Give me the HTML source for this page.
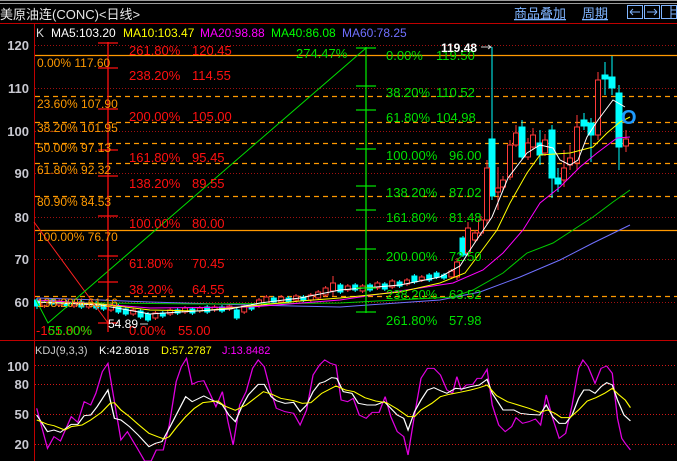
<!DOCTYPE html>
<html><head><meta charset="utf-8"><style>
html,body{margin:0;padding:0;background:#000;width:677px;height:461px;overflow:hidden}
svg{display:block}
text{font-family:"Liberation Sans","Noto Sans CJK SC",sans-serif}
</style></head><body>
<svg width="677" height="461" xmlns="http://www.w3.org/2000/svg">
<rect width="677" height="461" fill="#000"/>
<rect x="0" y="0" width="677" height="1" fill="#9a9a9a"/>
<rect x="0" y="3" width="677" height="1" fill="#9a9a9a"/>
<text x="0" y="19" fill="#e8e8e8" font-size="13">美原油连(CONC)&lt;日线&gt;</text>
<text x="514" y="18" fill="#7fb4ff" font-size="13" text-decoration="underline">商品叠加</text>
<text x="582" y="18" fill="#7fb4ff" font-size="13" text-decoration="underline">周期</text>
<g fill="none" stroke="#7fb4ff" stroke-width="1">
<rect x="627.5" y="5.5" width="15" height="13"/><rect x="644.5" y="5.5" width="15" height="13"/><rect x="661.5" y="5.5" width="15" height="13"/>
<path d="M630 12h10M630 12l3-3M630 12l3 3M657 12h-10M657 12l-3-3M657 12l-3 3M671 6v12M671 10h5M671 14h5"/>
</g>
<rect x="0" y="23" width="677" height="1" fill="#c00000"/>
<rect x="34" y="23" width="1" height="438" fill="#c00000"/>
<rect x="0" y="340" width="677" height="1" fill="#c00000"/>
<g font-size="12">
<text x="36" y="37" fill="#ddd">K</text>
<text x="51" y="37" fill="#fff">MA5:103.20</text>
<text x="123" y="37" fill="#ffff00">MA10:103.47</text>
<text x="200" y="37" fill="#ff00ff">MA20:98.88</text>
<text x="271" y="37" fill="#00ff00">MA40:86.08</text>
<text x="342" y="37" fill="#7070ff">MA60:78.25</text>
</g>
<g font-size="13" font-weight="bold" fill="#c8c8d0" text-anchor="end">
<text x="29" y="50">120</text><text x="29" y="93">110</text><text x="29" y="136">100</text><text x="29" y="178">90</text><text x="29" y="222">80</text><text x="29" y="264">70</text><text x="29" y="307">60</text>
<text x="29" y="371">100</text><text x="29" y="389">80</text><text x="29" y="419">50</text><text x="29" y="449">20</text>
</g>
<g stroke="#a01010" stroke-dasharray="1,2" stroke-width="1">
<path d="M35 45.5H677M35 88.5H677M35 131.5H677M35 173.5H677M35 217.5H677M35 259.5H677M35 302.5H677"/>
<path d="M35 365.5H677M35 384.5H677M35 414.5H677M35 444.5H677" stroke="#d01818"/>
</g>
<g stroke="#ff9900" stroke-width="1.2">
<path d="M35 55.5H677M35 230.5H677"/>
<path stroke-dasharray="5,4" d="M35 96.5H677M35 122.5H677M35 143.5H677M35 163.5H677M35 196.5H677M35 296.5H677"/>
</g>
<!-- candles: down (cyan) -->
<g fill="#00ffff" stroke="#00ffff" stroke-width="1">
<path d="M37 298V309M51.8 298V306M66.6 300V308M81.4 300V309M96.2 301V310M103.6 303V311M118.4 304V314M125.8 307V316M140.6 309V319M148 312V322M162.8 311V318M177.6 308V315M192.4 307V315M207.2 305V314M222 305V313M236.8 308V320M251.6 303V311M273.8 296V304M288.6 296V304M303.4 295V302M340.4 283V294M355.2 283V292M370 283V292M384.8 282V291M399.6 280V288M414.4 274V284M429.2 273V282M436.6 271V279M444 273V280M463 236V257M492 47V200M522 120V160M540 130V165M552 125V198M558 168V192M584 113V130M591 118V162M605 62V95M612 56V95M619 85V170"/>
<rect x="34.5" y="300" width="5" height="6"/><rect x="49.3" y="300" width="5" height="4"/><rect x="64.1" y="302" width="5" height="4"/><rect x="78.9" y="302" width="5" height="5"/><rect x="93.7" y="303" width="5" height="5"/><rect x="101.1" y="305" width="5" height="4"/><rect x="115.9" y="306" width="5" height="6"/><rect x="123.3" y="309" width="5" height="5"/><rect x="138.1" y="311" width="5" height="6"/><rect x="145.5" y="314" width="5" height="6"/><rect x="160.3" y="313" width="5" height="3"/><rect x="175.1" y="310" width="5" height="3"/><rect x="189.9" y="309" width="5" height="4"/><rect x="204.7" y="307" width="5" height="5"/><rect x="219.5" y="307" width="5" height="4"/><rect x="234.3" y="310" width="5" height="8"/><rect x="249.1" y="305" width="5" height="4"/><rect x="271.3" y="298" width="5" height="4"/><rect x="286.1" y="298" width="5" height="4"/><rect x="300.9" y="297" width="5" height="3"/><rect x="337.9" y="285" width="5" height="7"/><rect x="352.7" y="285" width="5" height="5"/><rect x="367.5" y="285" width="5" height="5"/><rect x="382.3" y="284" width="5" height="5"/><rect x="397.1" y="282" width="5" height="4"/><rect x="411.9" y="276" width="5" height="6"/><rect x="426.7" y="275" width="5" height="5"/><rect x="434.1" y="273" width="5" height="4"/><rect x="441.5" y="275" width="5" height="3"/><rect x="460" y="238" width="6" height="17"/><rect x="489" y="139" width="6" height="57"/><rect x="519" y="127" width="6" height="30"/><rect x="537" y="143" width="6" height="12"/><rect x="549" y="130" width="6" height="48"/><rect x="555" y="178" width="6" height="6"/><rect x="581" y="120" width="6" height="6"/><rect x="588" y="123" width="6" height="12"/><rect x="602" y="75" width="6" height="4"/><rect x="609" y="77" width="6" height="11"/><rect x="616" y="93" width="6" height="54"/>
</g>
<!-- candles: up (red hollow) -->
<g fill="#000" stroke="#ff3a3a" stroke-width="1">
<path d="M44.4 300V308M59.2 299V307M74 301V308M88.8 302V309M111 303V312M133.2 308V316M155.4 311V320M170.2 308V316M185 306V314M199.8 306V313M214.6 305V312M229.4 304V311M244.2 304V314M259 298V308M266.4 295V306M281.2 295V304M296 294V302M310.8 293V302M318.2 290V300M325.6 286V297M333 276V296M347.8 284V292M362.6 284V293M377.4 281V290M392.2 279V289M407 278V286M421.8 275V282M451.4 269V279M457 258V280M468 222V256M475 230V243M481 216V236M487 160V225M498 167V210M503 176V190M510 140V180M516 125V147M528 138V160M533 128V150M545 134V156M564 150V187M570 145V170M577 115V170M598 72V140M626 130V152"/>
<rect x="41.9" y="302" width="5" height="4"/><rect x="56.7" y="301" width="5" height="4"/><rect x="71.5" y="303" width="5" height="3"/><rect x="86.3" y="304" width="5" height="3"/><rect x="108.5" y="305" width="5" height="5"/><rect x="130.7" y="310" width="5" height="4"/><rect x="152.9" y="313" width="5" height="5"/><rect x="167.7" y="310" width="5" height="4"/><rect x="182.5" y="308" width="5" height="4"/><rect x="197.3" y="308" width="5" height="3"/><rect x="212.1" y="307" width="5" height="3"/><rect x="226.9" y="306" width="5" height="3"/><rect x="241.7" y="306" width="5" height="6"/><rect x="256.5" y="300" width="5" height="6"/><rect x="263.9" y="297" width="5" height="7"/><rect x="278.7" y="297" width="5" height="5"/><rect x="293.5" y="296" width="5" height="4"/><rect x="308.3" y="295" width="5" height="5"/><rect x="315.7" y="292" width="5" height="6"/><rect x="323.1" y="288" width="5" height="7"/><rect x="330.5" y="283" width="5" height="8"/><rect x="345.3" y="286" width="5" height="4"/><rect x="360.1" y="286" width="5" height="5"/><rect x="374.9" y="283" width="5" height="5"/><rect x="389.7" y="281" width="5" height="6"/><rect x="404.5" y="280" width="5" height="4"/><rect x="419.3" y="277" width="5" height="3"/><rect x="448.9" y="271" width="5" height="6"/><rect x="454.5" y="262" width="5" height="15"/><rect x="465.5" y="228" width="5" height="25"/><rect x="472.5" y="233" width="5" height="7"/><rect x="478.5" y="220" width="5" height="13"/><rect x="484.5" y="168" width="5" height="52"/><rect x="495.5" y="188" width="5" height="4"/><rect x="500.5" y="180" width="5" height="7"/><rect x="507.5" y="145" width="5" height="32"/><rect x="513.5" y="133" width="5" height="12"/><rect x="525.5" y="143" width="5" height="14"/><rect x="530.5" y="135" width="5" height="12"/><rect x="542.5" y="140" width="5" height="13"/><rect x="561.5" y="168" width="5" height="12"/><rect x="567.5" y="158" width="5" height="7"/><rect x="574.5" y="127" width="5" height="36"/><rect x="595.5" y="80" width="5" height="55"/><rect x="623.5" y="139" width="5" height="7"/>
</g>
<!-- moving averages -->
<g fill="none" stroke-width="1">
<polyline stroke="#7070ff" points="37,298 100,300 150,302 250,305 340,307 440,300 480,292 520,277 560,260 593,243 630,225"/>
<polyline stroke="#00cc00" points="37,302 100,303 200,304 340,303 453,297 473,290 503,273 527,253 553,243 573,230 593,217 613,202 630,190"/>
<polyline stroke="#ff00ff" points="37,300 100,304 150,308 250,307 340,300 453,283 483,270 503,253 523,230 540,203 560,187 580,167 597,153 617,138 630,137"/>
<polyline stroke="#ffff00" points="37,302 100,304 150,310 200,311 250,306 300,301 340,298 400,292 440,283 465,273 480,253 497,230 510,203 527,173 540,155 570,153 593,147 607,133 620,122 630,117"/>
<polyline stroke="#ffffff" points="37,302 100,305 150,314 180,312 230,309 260,303 300,298 340,290 400,285 440,277 460,266 470,250 480,235 492,217 508,178 527,153 540,145 553,148 560,160 570,165 578,160 587,137 598,120 613,100 625,107"/>
</g>
<path d="M34 222L108 323" stroke="#ff2020" fill="none"/>
<path d="M36 300L48 323L366 48" stroke="#00e000" fill="none"/>
<g stroke="#ff1010" stroke-width="1.3">
<path d="M108 42V332"/>
<path d="M98 43h20M98 68h20M98 109h20M98 150h20M98 176h20M98 216h20M98 256h20M98 282h20M98 323h20"/>
</g>
<g font-size="13" fill="#ff1010">
<text x="129" y="55">261.80%</text><text x="192" y="55">120.45</text>
<text x="129" y="80">238.20%</text><text x="192" y="80">114.55</text>
<text x="129" y="121">200.00%</text><text x="192" y="121">105.00</text>
<text x="129" y="162">161.80%</text><text x="192" y="162">95.45</text>
<text x="129" y="188">138.20%</text><text x="192" y="188">89.55</text>
<text x="129" y="228">100.00%</text><text x="192" y="228">80.00</text>
<text x="129" y="268">61.80%</text><text x="192" y="268">70.45</text>
<text x="129" y="294">38.20%</text><text x="192" y="294">64.55</text>
<text x="129" y="335">0.00%</text><text x="178" y="335">55.00</text>
<text x="36" y="335">-161.80%</text>
</g>
<g font-size="12" fill="#ff9900">
<text x="37" y="67">0.00% 117.60</text>
<text x="37" y="108">23.60% 107.90</text>
<text x="37" y="132">38.20% 101.95</text>
<text x="37" y="152">50.00% 97.13</text>
<text x="37" y="174">61.80% 92.32</text>
<text x="37" y="206">80.90% 84.53</text>
<text x="37" y="241">100.00% 76.70</text>
<text x="37" y="307">138.20% 61.16</text>
</g>
<text x="48" y="335" font-size="13" fill="#00e000">55.00%</text>
<g stroke="#00e000" stroke-width="1.3">
<path d="M366 47V313"/>
<path d="M356 48h20M356 86h20M356 110h20M356 149h20M356 186h20M356 210h20M356 249h20M356 288h20M356 312h20"/>
</g>
<g font-size="13" fill="#00e000">
<text x="296" y="58">274.47%</text>
<text x="386" y="60">0.00%</text><text x="436" y="60">119.50</text>
<text x="386" y="97">38.20%</text><text x="436" y="97">110.52</text>
<text x="386" y="122">61.80%</text><text x="436" y="122">104.98</text>
<text x="386" y="160">100.00%</text><text x="449" y="160">96.00</text>
<text x="386" y="197">138.20%</text><text x="449" y="197">87.02</text>
<text x="386" y="222">161.80%</text><text x="449" y="222">81.48</text>
<text x="386" y="261">200.00%</text><text x="449" y="261">72.50</text>
<text x="386" y="299">238.20%</text><text x="449" y="299">63.52</text>
<text x="386" y="325">261.80%</text><text x="449" y="325">57.98</text>
</g>
<text x="441" y="52" font-size="12" font-weight="bold" fill="#fff">119.48</text>
<path d="M481 47h10M488 45l3 2-3 2" stroke="#ccc" fill="none"/>
<text x="108" y="328" font-size="12" fill="#fff">54.89</text>
<path d="M140 324h8" stroke="#ccc"/>
<text x="621" y="124" font-size="20" font-weight="bold" fill="#1e9bff">O</text>
<g font-size="11">
<text x="35" y="354" fill="#ccc">KDJ(9,3,3)</text>
<text x="99" y="354" fill="#fff">K:42.8018</text>
<text x="161" y="354" fill="#ffff00">D:57.2787</text>
<text x="222" y="354" fill="#ff00ff">J:13.8482</text>
</g>
<g transform="translate(0,335) scale(0.4318,0.3333)" fill="none" stroke-width="3">
<polyline stroke="#e000e0" points="85,220 110,340 125,305 140,318 165,245 180,262 195,200 210,210 222,175 237,110 250,85 265,200 280,315 295,290 318,340 335,378 350,378 362,345 378,345 392,270 408,140 420,95 432,70 445,148 458,140 472,137 487,178 500,215 515,170 528,260 540,330 555,210 570,170 585,100 598,75 612,95 625,160 640,220 660,230 680,235 695,270 710,225 725,120 740,90 752,75 765,85 778,90 790,195 805,200 818,190 832,240 848,250 862,232 878,232 892,185 905,245 920,290 935,305 945,360 960,240 975,130 990,100 1005,100 1020,120 1035,165 1048,175 1058,125 1068,165 1080,150 1095,148 1105,130 1115,130 1128,103 1140,210 1155,270 1170,290 1185,275 1195,248 1210,265 1225,260 1240,252 1252,270 1265,180 1280,250 1295,310 1310,295 1325,210 1340,100 1350,75 1362,95 1378,145 1392,100 1405,93 1418,115 1430,250 1440,310 1448,325 1460,345"/>
<polyline stroke="#fff" points="85,240 110,290 125,285 140,292 165,268 180,268 195,242 210,240 225,215 250,165 265,250 280,255 300,275 320,300 345,335 360,325 375,320 392,280 410,235 430,185 445,200 472,183 490,195 500,200 515,210 530,240 545,260 560,215 575,180 598,148 612,148 628,185 640,197 660,205 680,202 695,230 710,210 725,170 740,145 752,140 768,128 780,130 795,170 815,175 830,205 850,210 870,210 890,200 905,220 920,240 935,250 945,285 960,230 975,195 990,165 1005,158 1020,167 1035,175 1055,160 1070,162 1090,155 1110,150 1128,133 1140,175 1165,225 1190,225 1205,235 1225,238 1250,240 1265,210 1280,245 1295,265 1310,265 1325,240 1340,190 1352,165 1365,165 1378,175 1392,155 1405,143 1418,150 1430,195 1445,240 1460,258"/>
<polyline stroke="#ffff00" points="85,255 110,268 125,272 150,285 165,275 190,270 210,255 235,232 255,205 265,203 280,225 300,245 320,268 345,295 365,305 380,312 392,305 410,275 430,245 450,220 470,203 490,200 505,198 520,213 545,226 570,210 590,190 610,170 630,178 650,190 680,197 700,205 720,203 745,175 778,153 800,165 820,170 845,188 870,198 895,203 920,222 945,245 960,245 975,225 1000,205 1020,185 1040,178 1065,172 1090,165 1110,158 1128,150 1150,182 1175,200 1200,210 1225,220 1250,232 1268,225 1285,235 1300,248 1320,248 1340,225 1360,198 1380,188 1400,175 1418,160 1432,178 1448,195 1460,218"/>
</g>
</svg>
</body></html>
